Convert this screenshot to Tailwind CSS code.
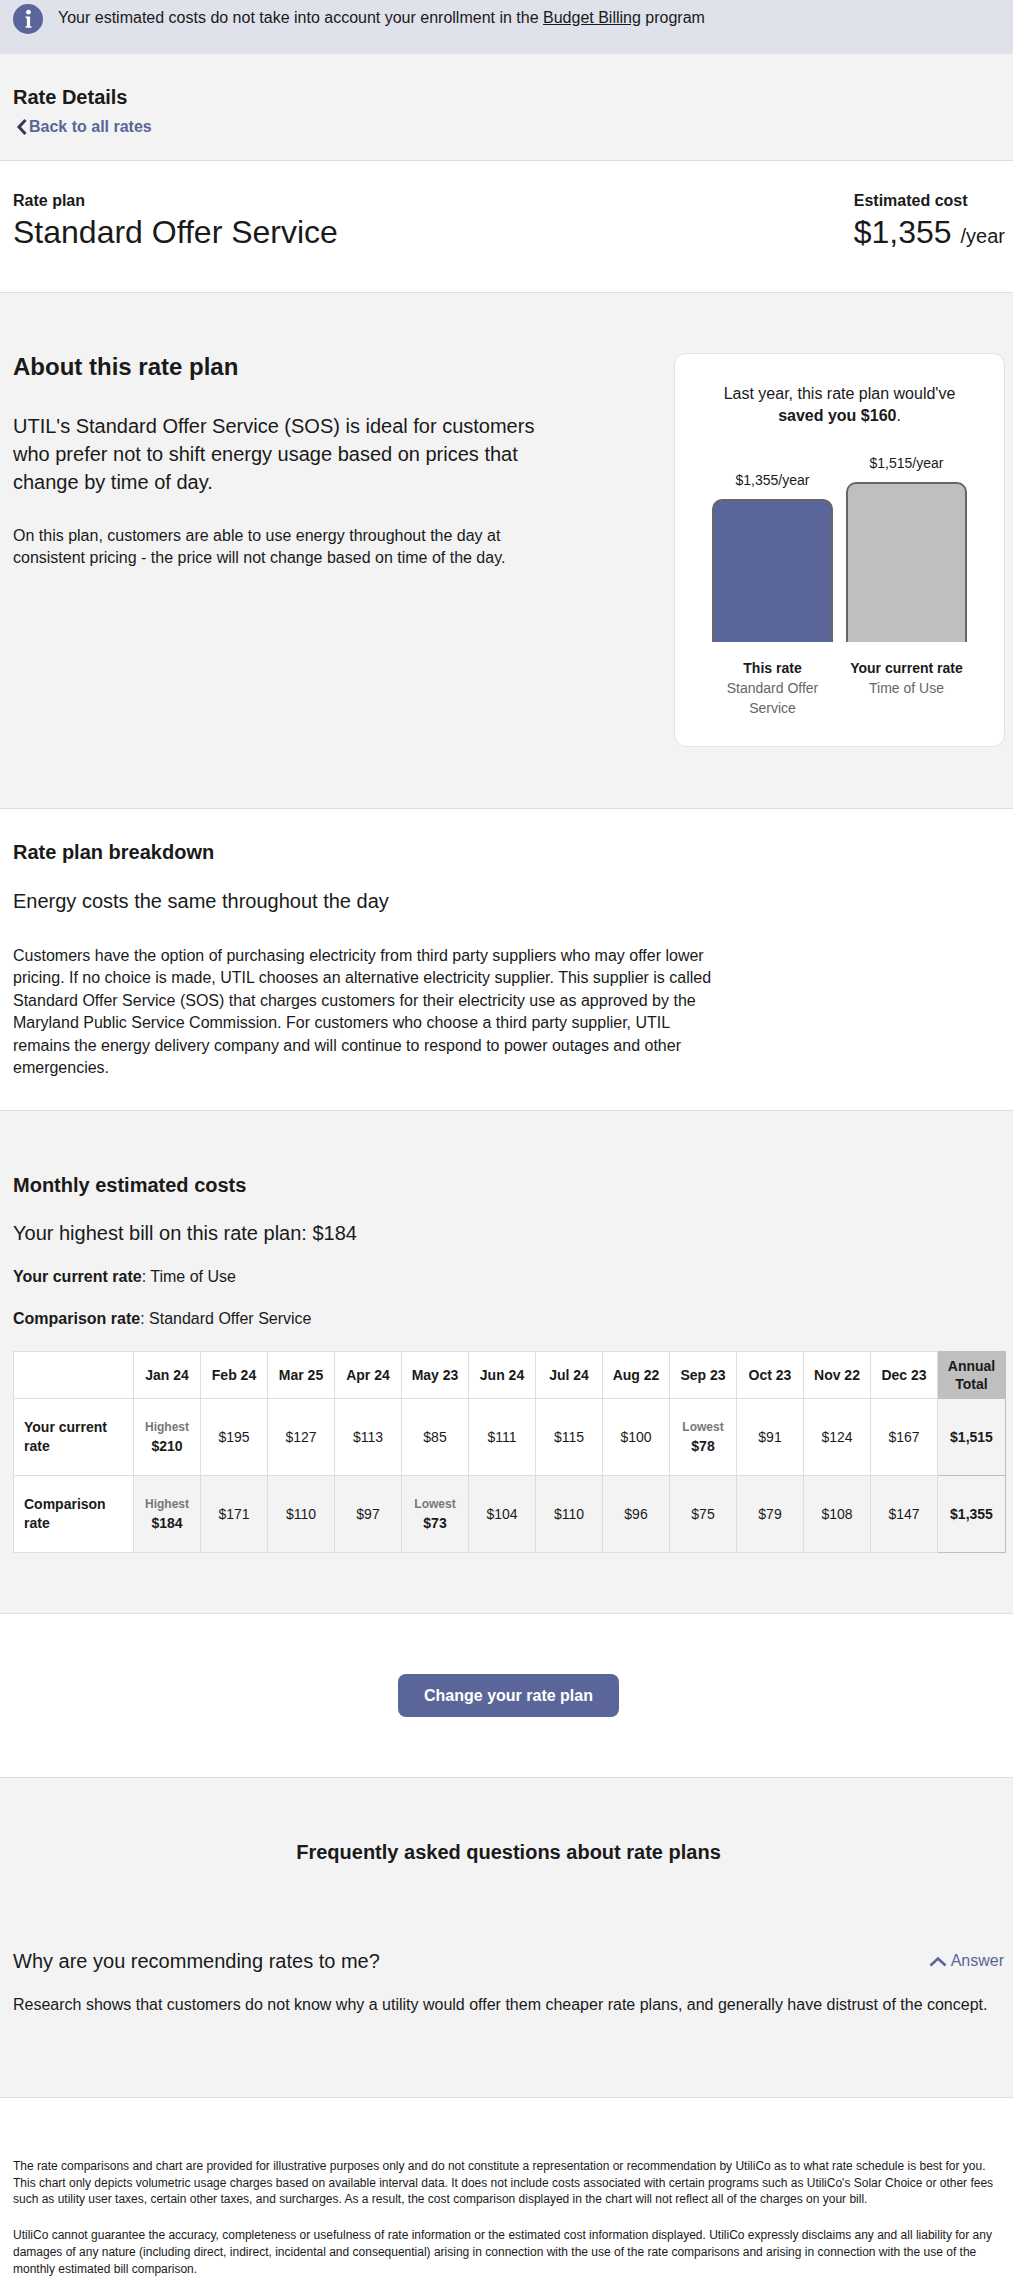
<!DOCTYPE html>
<html lang="en">
<head>
    <meta charset="UTF-8">
    <meta name="viewport" content="width=device-width, initial-scale=1.0">
    <script src="https://cdn.jsdelivr.net/npm/@tailwindcss/browser@4"></script>
    <title>Rate Details</title>
</head>
<body class="bg-white text-[#1a1a1a] font-['Liberation_Sans',Arial,sans-serif]">
    <!-- Banner -->
    <div class="h-[54px] bg-[#dfe1eb] pl-[13px] pt-[4px] flex items-start">
        <svg class="w-[30px] h-[30px] shrink-0" viewBox="0 0 30 30">
            <circle cx="15" cy="15" r="15" fill="#5a6699"/>
            <circle cx="15.5" cy="8.2" r="2.4" fill="#fff"/>
            <path d="M12.5 12.6h4.6v9.4l1.4.6v1.2h-6v-1.2l1.4-.6v-7.6l-1.4-.6z" fill="#fff"/>
        </svg>
        <p class="ml-[15px] text-[16px] leading-[28px] mt-[0px]">Your estimated costs do not take into account your enrollment in the <span class="underline">Budget Billing</span> program</p>
    </div>

    <!-- Header -->
    <div class="bg-[#f3f3f3] border-b border-[#dedede] px-[13px] pt-[29px] pb-[21px]">
        <h1 class="text-[20px] leading-[28px] font-bold">Rate Details</h1>
        <a class="mt-[4px] flex items-center h-[24px] text-[16px] font-bold text-[#5a6699]">
            <svg class="w-[12px] h-[18px] ml-[2px] mr-[2px]" viewBox="0 0 12 18" fill="none"><path d="M10.5 2 L4 9 L10.5 16" stroke="#2f3a5c" stroke-width="3"/></svg>
            Back to all rates
        </a>
    </div>

    <!-- Plan summary -->
    <div class="bg-white border-b border-[#dedede] pl-[13px] pr-[8px] pt-[29px] pb-[40px] flex justify-between">
        <div>
            <div class="text-[16px] leading-[22px] font-bold">Rate plan</div>
            <div class="text-[32px] leading-[40px]">Standard Offer Service</div>
        </div>
        <div>
            <div class="text-[16px] leading-[22px] font-bold">Estimated cost</div>
            <div class="text-[32px] leading-[40px]">$1,355 <span class="text-[20px] leading-none">/year</span></div>
        </div>
    </div>

    <!-- About -->
    <div class="bg-[#f3f3f3] border-b border-[#dedede] pl-[13px] pr-[8px] pb-[61px] flex justify-between">
        <div class="w-[550px] pt-[58px]">
            <h2 class="text-[24px] leading-[32px] font-bold">About this rate plan</h2>
            <p class="mt-[29px] text-[20px] leading-[28px]">UTIL's Standard Offer Service (SOS) is ideal for customers who prefer not to shift energy usage based on prices that change by time of day.</p>
            <p class="mt-[29px] text-[16px] leading-[22.4px]">On this plan, customers are able to use energy throughout the day at consistent pricing - the price will not change based on time of the day.</p>
        </div>
        <div class="mt-[60px] w-[331px] h-[394px] bg-white border border-[#e3e3e3] rounded-[12px] pt-[29px] px-[37px]">
            <p class="text-center text-[16px] leading-[22px]">Last year, this rate plan would've<br><b>saved you $160</b>.</p>
            <div class="mt-[26px] flex items-end gap-[13px] h-[189px]">
                <div class="w-[121px] text-center">
                    <div class="text-[14px] leading-[20px] mb-[9px]">$1,355/year</div>
                    <div class="h-[143px] bg-[#5a6699] border-2 border-b-0 border-[#666] rounded-t-[10px]"></div>
                </div>
                <div class="w-[121px] text-center">
                    <div class="text-[14px] leading-[20px] mb-[9px]">$1,515/year</div>
                    <div class="h-[160px] bg-[#bfbfbf] border-2 border-b-0 border-[#666] rounded-t-[10px]"></div>
                </div>
            </div>
            <div class="mt-[16px] flex gap-[13px] text-center text-[14px] leading-[20px]">
                <div class="w-[121px] px-[12px]"><div class="font-bold">This rate</div><div class="text-[#666]">Standard Offer Service</div></div>
                <div class="w-[121px]"><div class="font-bold whitespace-nowrap">Your current rate</div><div class="text-[#666]">Time of Use</div></div>
            </div>
        </div>
    </div>

    <!-- Breakdown -->
    <div class="bg-white border-b border-[#dedede] px-[13px] pt-[29px] pb-[31px]">
        <h2 class="text-[20px] leading-[28px] font-bold">Rate plan breakdown</h2>
        <p class="mt-[21px] text-[20px] leading-[28px]">Energy costs the same throughout the day</p>
        <p class="mt-[30px] w-[715px] text-[16px] leading-[22.4px]">Customers have the option of purchasing electricity from third party suppliers who may offer lower pricing. If no choice is made, UTIL chooses an alternative electricity supplier. This supplier is called Standard Offer Service (SOS) that charges customers for their electricity use as approved by the Maryland Public Service Commission. For customers who choose a third party supplier, UTIL remains the energy delivery company and will continue to respond to power outages and other emergencies.</p>
    </div>

    <!-- Monthly costs -->
    <div class="bg-[#f3f3f3] border-b border-[#dedede] pl-[13px] pr-[8px] pt-[60px] pb-[60px]">
        <h2 class="text-[20px] leading-[28px] font-bold">Monthly estimated costs</h2>
        <p class="mt-[20px] text-[20px] leading-[28px]">Your highest bill on this rate plan: $184</p>
        <p class="mt-[18px] text-[16px] leading-[24px]"><b>Your current rate</b>: Time of Use</p>
        <p class="mt-[18px] text-[16px] leading-[24px]"><b>Comparison rate</b>: Standard Offer Service</p>
        <table class="mt-[20px] w-[992px] table-fixed border-collapse text-[14px] leading-[19px] text-center">
            <thead>
                <tr class="h-[47px] bg-white font-bold">
                    <th class="w-[120px] border border-[#dedede]"></th>
                    <th class="w-[67px] border border-[#dedede]">Jan 24</th>
                    <th class="w-[67px] border border-[#dedede]">Feb 24</th>
                    <th class="w-[67px] border border-[#dedede]">Mar 25</th>
                    <th class="w-[67px] border border-[#dedede]">Apr 24</th>
                    <th class="w-[67px] border border-[#dedede]">May 23</th>
                    <th class="w-[67px] border border-[#dedede]">Jun 24</th>
                    <th class="w-[67px] border border-[#dedede]">Jul 24</th>
                    <th class="w-[67px] border border-[#dedede]">Aug 22</th>
                    <th class="w-[67px] border border-[#dedede]">Sep 23</th>
                    <th class="w-[67px] border border-[#dedede]">Oct 23</th>
                    <th class="w-[67px] border border-[#dedede]">Nov 22</th>
                    <th class="w-[67px] border border-[#dedede]">Dec 23</th>
                    <th class="w-[68px] border border-[#bfbfbf] bg-[#bfbfbf] leading-[18px]">Annual Total</th>
                </tr>
            </thead>
            <tbody>
                <tr class="h-[77px] bg-white">
                    <th class="border border-[#dedede] text-left pl-[10px] pr-[20px] font-bold">Your current rate</th>
                    <td class="border border-[#dedede]"><div class="text-[12px] font-bold text-[#777]">Highest</div><b>$210</b></td>
                    <td class="border border-[#dedede]">$195</td>
                    <td class="border border-[#dedede]">$127</td>
                    <td class="border border-[#dedede]">$113</td>
                    <td class="border border-[#dedede]">$85</td>
                    <td class="border border-[#dedede]">$111</td>
                    <td class="border border-[#dedede]">$115</td>
                    <td class="border border-[#dedede]">$100</td>
                    <td class="border border-[#dedede]"><div class="text-[12px] font-bold text-[#777]">Lowest</div><b>$78</b></td>
                    <td class="border border-[#dedede]">$91</td>
                    <td class="border border-[#dedede]">$124</td>
                    <td class="border border-[#dedede]">$167</td>
                    <td class="border border-[#bfbfbf] bg-[#f3f3f3] font-bold">$1,515</td>
                </tr>
                <tr class="h-[77px] bg-[#f3f3f3]">
                    <th class="border border-[#dedede] bg-white text-left pl-[10px] pr-[20px] font-bold">Comparison rate</th>
                    <td class="border border-[#dedede]"><div class="text-[12px] font-bold text-[#777]">Highest</div><b>$184</b></td>
                    <td class="border border-[#dedede]">$171</td>
                    <td class="border border-[#dedede]">$110</td>
                    <td class="border border-[#dedede]">$97</td>
                    <td class="border border-[#dedede]"><div class="text-[12px] font-bold text-[#777]">Lowest</div><b>$73</b></td>
                    <td class="border border-[#dedede]">$104</td>
                    <td class="border border-[#dedede]">$110</td>
                    <td class="border border-[#dedede]">$96</td>
                    <td class="border border-[#dedede]">$75</td>
                    <td class="border border-[#dedede]">$79</td>
                    <td class="border border-[#dedede]">$108</td>
                    <td class="border border-[#dedede]">$147</td>
                    <td class="border border-[#bfbfbf] font-bold">$1,355</td>
                </tr>
            </tbody>
        </table>
    </div>

    <!-- CTA -->
    <div class="bg-white border-b border-[#dedede] pt-[60px] pb-[60px] flex justify-center">
        <button class="ml-[4px] w-[221px] h-[43px] bg-[#5a6699] rounded-[8px] text-white text-[16px] font-bold">Change your rate plan</button>
    </div>

    <!-- FAQ -->
    <div class="bg-[#f3f3f3] border-b border-[#dedede] pl-[13px] pr-[9px] pt-[60px] pb-[80px]">
        <h2 class="text-center text-[20px] leading-[28px] font-bold">Frequently asked questions about rate plans</h2>
        <div class="mt-[81px] flex justify-between items-center h-[28px]">
            <span class="text-[20px] leading-[28px]">Why are you recommending rates to me?</span>
            <span class="flex items-center text-[16px] text-[#5a6699]">
                <svg class="w-[18px] h-[12px] mr-[4px]" viewBox="0 0 18 12" fill="none"><path d="M1.5 10.5 L9 3.5 L16.5 10.5" stroke="#5a6699" stroke-width="2.6"/></svg>
                Answer
            </span>
        </div>
        <p class="mt-[19px] text-[16px] leading-[22.4px]">Research shows that customers do not know why a utility would offer them cheaper rate plans, and generally have distrust of the concept.</p>
    </div>

    <!-- Disclaimer -->
    <div class="bg-white px-[13px] pt-[60px] text-[12px] leading-[16.8px]">
        <p>The rate comparisons and chart are provided for illustrative purposes only and do not constitute a representation or recommendation by UtiliCo as to what rate schedule is best for you. This chart only depicts volumetric usage charges based on available interval data. It does not include costs associated with certain programs such as UtiliCo's Solar Choice or other fees such as utility user taxes, certain other taxes, and surcharges. As a result, the cost comparison displayed in the chart will not reflect all of the charges on your bill.</p>
        <p class="mt-[19px]">UtiliCo cannot guarantee the accuracy, completeness or usefulness of rate information or the estimated cost information displayed. UtiliCo expressly disclaims any and all liability for any damages of any nature (including direct, indirect, incidental and consequential) arising in connection with the use of the rate comparisons and arising in connection with the use of the monthly estimated bill comparison.</p>
    </div>
</body>
</html>
